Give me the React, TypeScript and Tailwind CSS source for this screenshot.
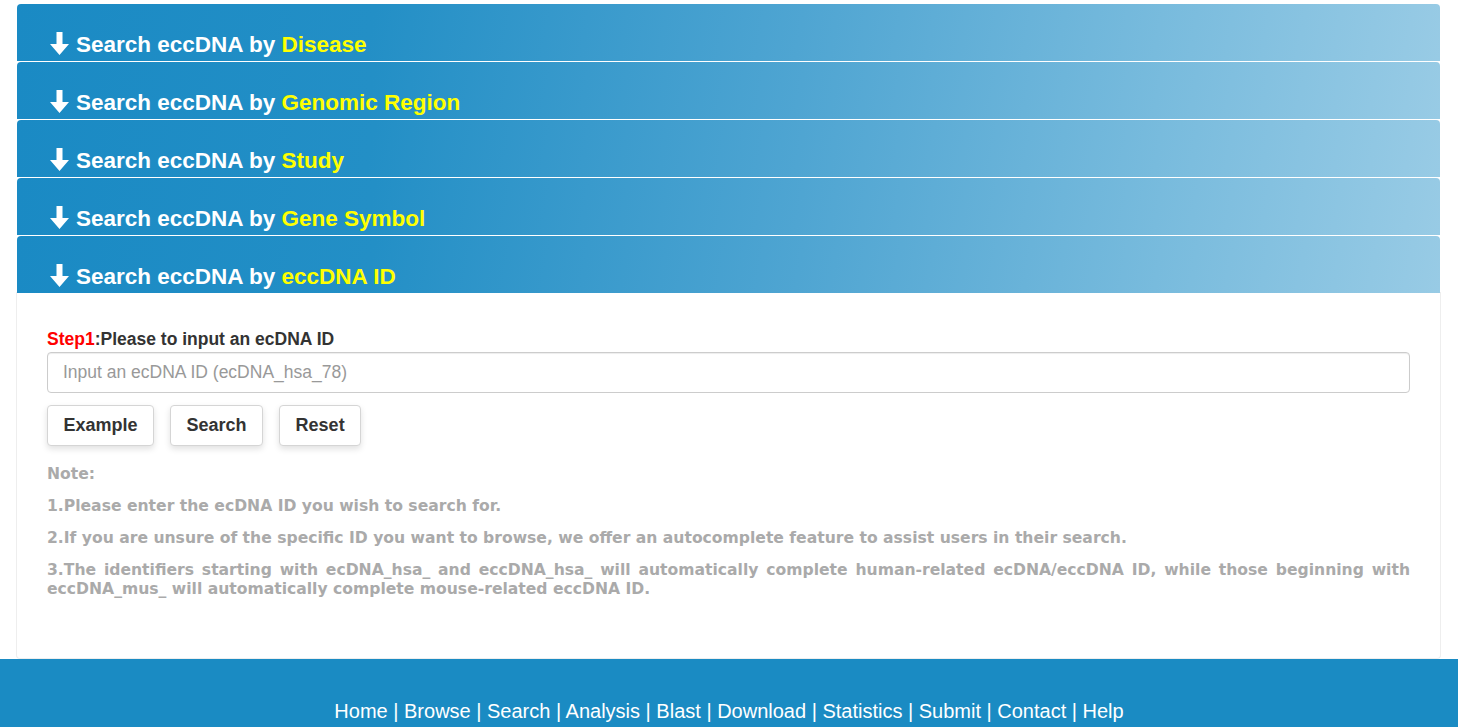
import React from "react";

const headers = ["Disease", "Genomic Region", "Study", "Gene Symbol", "eccDNA ID"];

const ArrowDown = () => (
  <svg width="19" height="23" viewBox="0 0 19 23" className="mr-[7px] shrink-0 -mt-[2px]">
    <path d="M6.5 0h6v12h6.5l-9.5 11l-9.5-11h6.5z" fill="#fff" />
  </svg>
);

const PanelHeader = ({ label }: { label: string }) => (
  <div className="h-[57px] rounded-t-[4px] bg-[linear-gradient(100deg,#1a8ac4_0%,#238fc6_25%,#4fa5d2_55%,#78bbdd_80%,#98cbe5_100%)] flex items-end pl-[33px] pb-[3px]">
    <div className="flex items-center text-[22.5px] font-bold leading-[27px] text-white">
      <ArrowDown />
      <span>Search eccDNA by&nbsp;</span>
      <span className="text-[#ffff00]">{label}</span>
    </div>
  </div>
);

const notes = [
  "1.Please enter the ecDNA ID you wish to search for.",
  "2.If you are unsure of the specific ID you want to browse, we offer an autocomplete feature to assist users in their search.",
  "3.The identifiers starting with ecDNA_hsa_ and eccDNA_hsa_ will automatically complete human-related ecDNA/eccDNA ID, while those beginning with eccDNA_mus_ will automatically complete mouse-related eccDNA ID.",
];

export default function App() {
  return (
    <div className="min-h-screen bg-white font-['Liberation_Sans',Arial,sans-serif]">
      <div className="pl-[17px] pt-[4px] pr-[18px] flex flex-col gap-[1px]">
        {headers.map((h) => (
          <PanelHeader key={h} label={h} />
        ))}
      </div>

      {/* Body of open panel */}
      <div className="ml-[16px] mr-[17px] border-x border-b border-[#eeeeee] rounded-b-[4px] px-[30px] pt-[37px] pb-[59px] -mt-[1px]">
        <div className="text-[17.5px] font-bold leading-[20px] text-[#333]">
          <span className="text-[#ff0000]">Step1</span>:Please to input an ecDNA ID
        </div>
        <input
          type="text"
          placeholder="Input an ecDNA ID (ecDNA_hsa_78)"
          className="mt-[3px] w-full h-[41px] rounded-[4px] border border-[#cccccc] px-[15px] text-[17.5px] text-[#555] placeholder:text-[#999] outline-none shadow-[inset_0_1px_1px_rgba(0,0,0,0.075)]"
        />
        <div className="mt-[12px] flex gap-[16px]">
          {["Example", "Search", "Reset"].map((b) => (
            <button
              key={b}
              className="h-[41px] px-[15.5px] rounded-[4px] border border-[#d5d5d5] bg-white text-[18px] font-bold text-[#333] shadow-[0_3px_6px_rgba(0,0,0,0.12)]"
            >
              {b}
            </button>
          ))}
        </div>
        <div className="mt-[19px] font-['Comic_Sans_MS','DejaVu_Sans',cursive] text-[15.6px] font-bold text-[#aaaaaa]">
          <p className="leading-[19px]">Note:</p>
          {notes.map((n) => (
            <p key={n} className="mt-[13px] leading-[19px] text-justify">
              {n}
            </p>
          ))}
        </div>
      </div>

      <footer className="bg-[#1a8bc3] pt-[39px] pb-[20px] text-center text-[20px] leading-[26px] text-white">
        Home | Browse | Search | Analysis | Blast | Download | Statistics | Submit | Contact | Help
      </footer>
    </div>
  );
}
